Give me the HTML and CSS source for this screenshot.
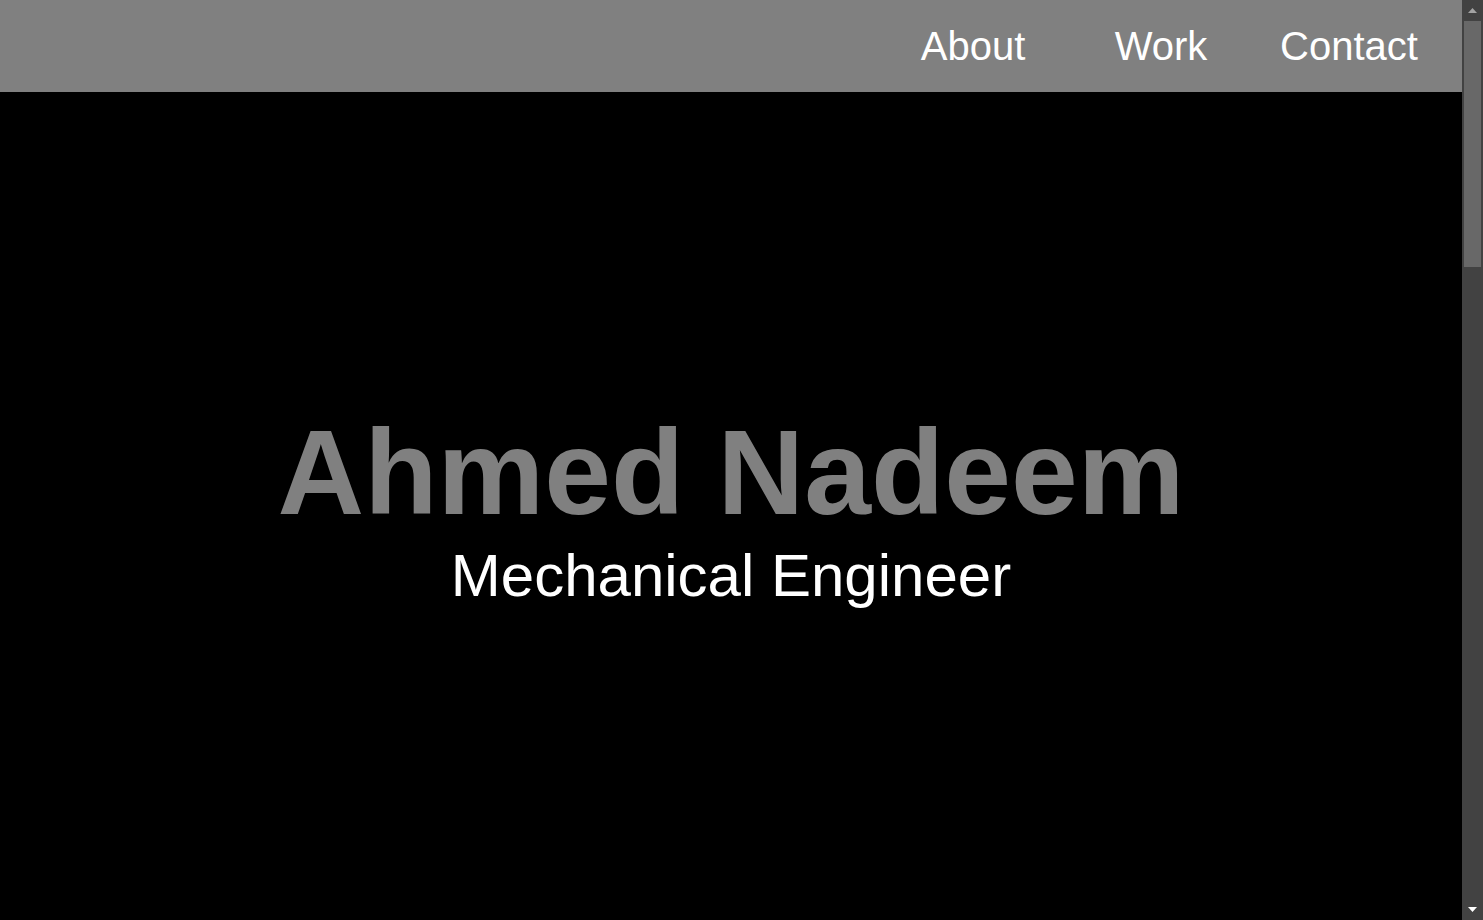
FILE: index.html
```html
<!DOCTYPE html>
<html lang="en">
<head>
<meta charset="utf-8">
<title>Ahmed Nadeem</title>
<link rel="stylesheet" href="styles.css">
</head>
<body>
<div class="page">
  <header class="site-header">
    <nav class="nav">
      <a class="nav-link" href="#about">About</a>
      <a class="nav-link" href="#work">Work</a>
      <a class="nav-link" href="#contact">Contact</a>
    </nav>
  </header>
  <main>
    <section class="hero">
      <h1 class="hero-name">Ahmed Nadeem</h1>
      <p class="hero-title">Mechanical Engineer</p>
    </section>
    <section class="section section-about" id="about"></section>
    <section class="section section-work" id="work"></section>
    <section class="section section-contact" id="contact"></section>
  </main>
</div>
<div class="scrollbar" aria-hidden="true">
  <div class="sb-button">
    <svg width="9" height="5" viewBox="0 0 9 5"><polygon points="4.5,0 9,5 0,5" fill="#a3a3a3"/></svg>
  </div>
  <div class="sb-track">
    <div class="sb-thumb"></div>
  </div>
  <div class="sb-button">
    <svg width="9" height="5" viewBox="0 0 9 5"><polygon points="0,0 9,0 4.5,5" fill="#ffffff"/></svg>
  </div>
</div>
</body>
</html>
```

FILE: styles.css
```css
html, body {
  margin: 0;
  padding: 0;
  height: 100%;
  overflow: hidden;
}

body {
  display: flex;
  background: #000;
  font-family: "Liberation Sans", Arial, sans-serif;
  color: #fff;
}

.page {
  flex: 1;
  min-width: 0;
  height: 100vh;
  overflow-y: auto;
  scrollbar-width: none;
}

.page::-webkit-scrollbar {
  display: none;
}

.scrollbar {
  width: 21px;
  flex: none;
  height: 100vh;
  background: #424242;
  display: flex;
  flex-direction: column;
}

.sb-button {
  height: 21px;
  flex: none;
  display: flex;
  align-items: center;
  justify-content: center;
}

.sb-button svg {
  display: block;
}

.sb-track {
  flex: 1;
  padding: 0 2px;
}

.sb-thumb {
  height: 246px;
  background: #686868;
}

.site-header {
  background: #808080;
  height: 92px;
  display: flex;
  align-items: center;
  justify-content: flex-end;
}

.nav {
  display: flex;
  padding-right: 19px;
}

.nav-link {
  width: 188px;
  text-align: center;
  color: #fff;
  text-decoration: none;
  font-size: 40px;
  line-height: normal;
}

.hero {
  height: calc(100vh - 92px);
  display: flex;
  flex-direction: column;
  align-items: center;
  justify-content: center;
  text-align: center;
}

.hero-name {
  margin: 0;
  font-size: 120px;
  font-weight: bold;
  color: #808080;
  line-height: normal;
}

.hero-title {
  margin: 0;
  font-size: 60px;
  line-height: normal;
  color: #fff;
}

.section {
  background: #000;
}

.section-about {
  height: 920px;
}

.section-work {
  height: 920px;
}

.section-contact {
  height: 553px;
}
```
